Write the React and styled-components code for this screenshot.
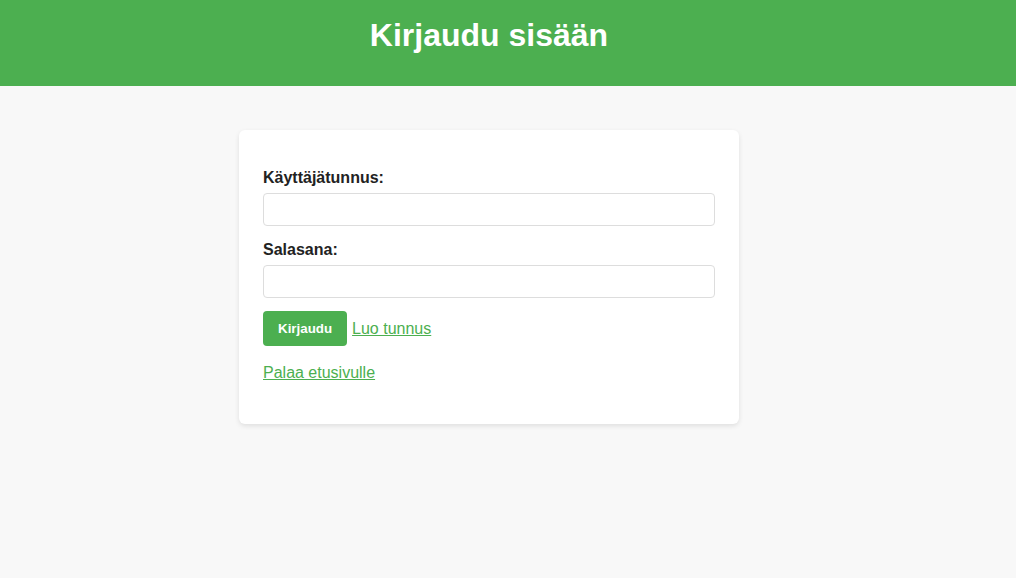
import React from 'react'
import styled, { createGlobalStyle } from 'styled-components'

const GlobalStyle = createGlobalStyle`
    html, body {
        margin: 0;
        padding: 0;
        background-color: #F8F8F8;
        font-family: "Liberation Sans", Arial, sans-serif;
        color: #222222;
    }
`

const Page = styled.div`
    min-height: 578px;
    display: flex;
    flex-direction: column;
`

const Header = styled.header`
    background-color: #4CAF50;
    height: 86px;
    box-sizing: border-box;
    padding: 17px 38px 0 0;
    display: flex;
    justify-content: center;
`

const Title = styled.h1`
    margin: 0;
    font-size: 32px;
    line-height: 37px;
    font-weight: 700;
    color: #FFFFFF;
`

const Main = styled.main`
    display: flex;
    justify-content: center;
    padding: 44px 38px 0 0;
`

const Card = styled.div`
    width: 500px;
    box-sizing: border-box;
    padding: 24px;
    background-color: #FFFFFF;
    border-radius: 6px;
    box-shadow: 0 2px 5px rgba(0, 0, 0, 0.1);
`

const Form = styled.form`
    display: flex;
    flex-direction: column;
`

const Field = styled.div`
    display: flex;
    flex-direction: column;
    gap: 6px;
    margin-top: 15px;
`

const Label = styled.label`
    font-size: 16px;
    line-height: 18px;
    font-weight: 700;
    color: #222222;
`

const Input = styled.input`
    height: 33px;
    box-sizing: border-box;
    border: 1px solid #DDDDDD;
    border-radius: 4px;
    padding: 8px;
    font-family: inherit;
    font-size: 14px;
`

const Actions = styled.div`
    display: flex;
    align-items: center;
    gap: 5px;
    margin-top: 13px;
`

const Button = styled.button`
    height: 35px;
    padding: 0 15px;
    border: none;
    border-radius: 4px;
    background-color: #4CAF50;
    color: #FFFFFF;
    font-family: inherit;
    font-size: 13.333px;
    font-weight: 700;
    cursor: pointer;
`

const TextLink = styled.a`
    font-size: 16px;
    line-height: 18px;
    color: #4CAF50;
    text-decoration: underline;
`

const Back = styled.p`
    margin: 18px 0 18px;
    line-height: 18px;
`

const App = () => {
    return (
        <>
            <GlobalStyle />
            <Page>
                <Header>
                    <Title>Kirjaudu sisään</Title>
                </Header>
                <Main>
                    <Card>
                        <Form onSubmit={(e) => e.preventDefault()}>
                            <Field>
                                <Label htmlFor="username">Käyttäjätunnus:</Label>
                                <Input id="username" type="text" />
                            </Field>
                            <Field>
                                <Label htmlFor="password">Salasana:</Label>
                                <Input id="password" type="password" />
                            </Field>
                            <Actions>
                                <Button type="submit">Kirjaudu</Button>
                                <TextLink href="#">Luo tunnus</TextLink>
                            </Actions>
                        </Form>
                        <Back>
                            <TextLink href="#">Palaa etusivulle</TextLink>
                        </Back>
                    </Card>
                </Main>
            </Page>
        </>
    )
}

export default App
